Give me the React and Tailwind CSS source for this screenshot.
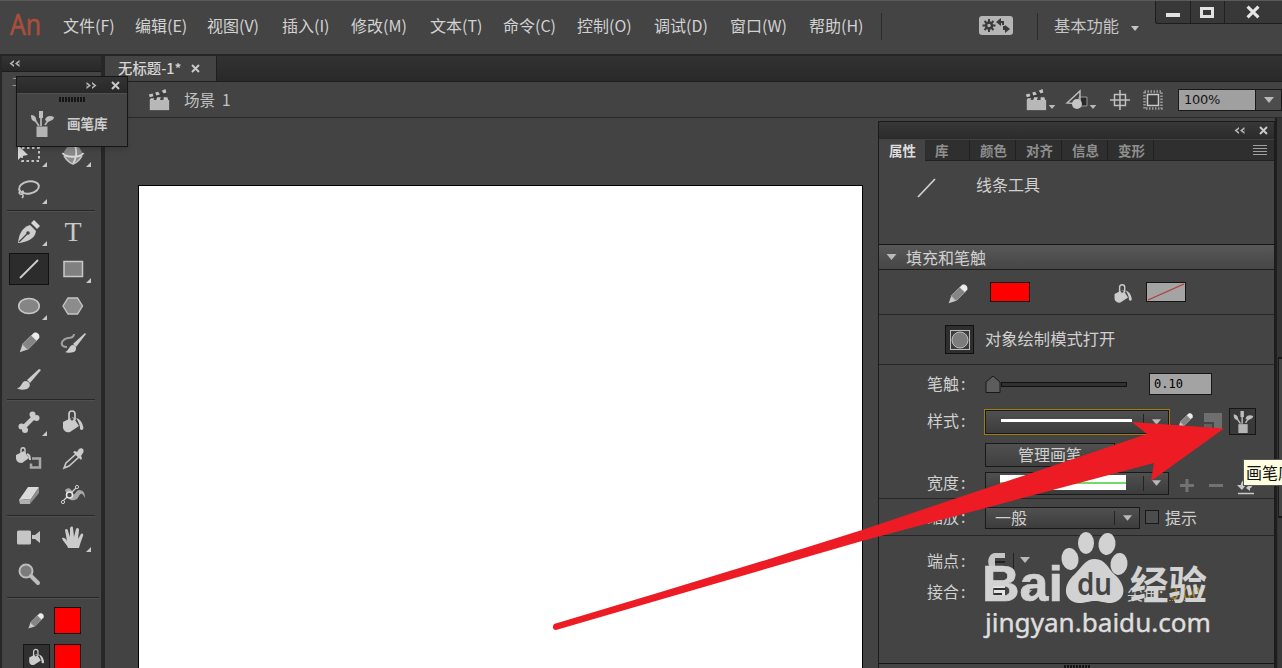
const FONT = "font-['Noto_Sans','Noto_Sans_CJK_SC',sans-serif]";
const CJK = "font-['Noto_Sans_CJK_SC',sans-serif]";

const MENUS = [
  { label: '文件(F)', width: 'w-[72px]' },
  { label: '编辑(E)', width: 'w-[72px]' },
  { label: '视图(V)', width: 'w-[75px]' },
  { label: '插入(I)', width: 'w-[69px]' },
  { label: '修改(M)', width: 'w-[79px]' },
  { label: '文本(T)', width: 'w-[73px]' },
  { label: '命令(C)', width: 'w-[74px]' },
  { label: '控制(O)', width: 'w-[77px]' },
  { label: '调试(D)', width: 'w-[76px]' },
  { label: '窗口(W)', width: 'w-[79px]' },
  { label: '帮助(H)', width: 'w-[72px]' },
];

const TABS = [
  { label: '库', width: 'w-[45px] pl-[10px]' },
  { label: '颜色', width: 'w-[46px] pl-[10px]' },
  { label: '对齐', width: 'w-[46px] pl-[10px]' },
  { label: '信息', width: 'w-[46px] pl-[10px]' },
  { label: '变形', width: 'w-[46px] pl-[10px]' },
];

/** Square svg box shared by the tool icons. */
function Icon({ size = 26, children }) {
  return (
    <svg width={size} height={size} viewBox="0 0 26 26" fill="none" className="shrink-0">
      {children}
    </svg>
  );
}

const TransformIcon = () => (
  <Icon>
    <rect x="6" y="7" width="17" height="13" stroke="#c4c4c4" strokeWidth="2" strokeDasharray="2.5 2.5" />
    <path d="M2 4v15l4-4 6-1z" fill="#d6d6d6" />
  </Icon>
);

const Rotate3dIcon = () => (
  <Icon>
    <circle cx="13" cy="13" r="9" fill="#8a8a8a" />
    <path d="M2.500 12c3 5 18 5 21 0" stroke="#d8d8d8" strokeWidth="1.800" />
    <path d="M15 4c2 6 2 12-2 19" stroke="#d8d8d8" strokeWidth="1.8" />
    <path d="M4 15c2 3 5 7 9 8 4-1 7-5 9-8" stroke="#c4c4c4" strokeWidth="1.400" />
  </Icon>
);

const LassoIcon = () => (
  <Icon>
    <ellipse cx="13" cy="10.5" rx="10" ry="6" transform="rotate(-10 13 10.5)" stroke="#c4c4c4" strokeWidth="2" />
    <path d="M4 14c-2 2 0 4 2 3s2-3 0-3m0 3c2 1 1 3 0 4" stroke="#c4c4c4" strokeWidth="1.6" />
  </Icon>
);

const PenIcon = () => (
  <Icon>
    <path d="M2 24C3 16 5 9 14 6l6 6c-1 8-8 10-16 12z" fill="#cdcdcd" />
    <path d="M15 4l3-3 6 6-3 3z" fill="#d8d8d8" />
    <path d="M3 23l8-8" stroke="#444" strokeWidth="1.2" />
    <circle cx="12" cy="14" r="1.8" fill="#444" />
  </Icon>
);

const LineIcon = () => (
  <Icon>
    <path d="M4 22L22 4" stroke="#cfcfcf" strokeWidth="1.8" />
  </Icon>
);

const RectIcon = () => (
  <Icon>
    <rect x="4" y="5.500" width="18.500" height="15" fill="#808080" stroke="#c8c8c8" strokeWidth="1.5" />
  </Icon>
);

const OvalIcon = () => (
  <Icon>
    <ellipse cx="13" cy="13" rx="10.3" ry="7.6" fill="#858585" stroke="#c8c8c8" strokeWidth="1.5" />
  </Icon>
);

const PolyIcon = () => (
  <Icon>
    <path d="M8 5h9.500l5 8-5 8H8l-5-8z" fill="#8c8c8c" stroke="#c4c4c4" strokeWidth="1.4" />
  </Icon>
);

const PencilIcon = ({ size }) => (
  <Icon size={size}>
    <path d="M2 24l3-9 6 6z" fill="#c8c8c8" />
    <path d="M5 15L15 5l6 6-10 10z" fill="#858585" stroke="#a8a8a8" />
    <path d="M15 5l3-3c4-1 7 2 6 6l-3 3z" fill="#ececec" />
  </Icon>
);

const BrushIcon = () => (
  <Icon>
    <path d="M11 13L23 2l2 1-11 13z" fill="#cdcdcd" />
    <path d="M1 21c5 0 4-7 9-7 5 1 5 6 1 8-4 1-8 1-10-1z" fill="#cdcdcd" />
  </Icon>
);

const PaintBrushIcon = () => (
  <Icon>
    <path d="M13 14L25 3l1 1-10 13z" fill="#cdcdcd" />
    <path d="M5 22c4-1 4-7 8-7 4 1 4 5 1 7-3 1-7 1-9 0z" fill="#cdcdcd" />
    <path d="M14 4c0 3-3 4-6 4-5 1-8 5-5 8 1 1 2 1 4 1" stroke="#a0a0a0" strokeWidth="2" />
  </Icon>
);

const BoneIcon = () => (
  <Icon>
    <path d="M7 19L19 7" stroke="#cacaca" strokeWidth="4.500" />
    <g fill="#cacaca">
      <circle cx="5.500" cy="17.500" r="3" />
      <circle cx="9" cy="21" r="3" />
      <circle cx="16.500" cy="5.500" r="3" />
      <circle cx="20.500" cy="9" r="3" />
    </g>
  </Icon>
);

const BucketIcon = ({ size }) => (
  <Icon size={size}>
    <path d="M3 13l10-5 6 9-9 6c-4 1-6-1-7-4z" fill="#cbcbcb" />
    <path d="M9 12V5c0-4 6-4 6 0v6" stroke="#cbcbcb" strokeWidth="1.7" />
    <circle cx="12" cy="10" r="1.500" fill="#444" />
    <path d="M16 9c4 1 6 4 7 8 2 5-4 5-3 1-1-4-2-6-4-9z" fill="#cbcbcb" />
  </Icon>
);

const InkBottleIcon = () => (
  <Icon>
    <path d="M0 9l8-4 5 7-7 5c-3 0-5-1-6-4z" fill="#cbcbcb" />
    <path d="M5 8V4c0-3 4-3 4 0v4" stroke="#cbcbcb" strokeWidth="1.4" />
    <path d="M11 8c3 1 3 4 3 6" stroke="#cbcbcb" strokeWidth="2" />
    <path d="M16 12.500h8v9h-9v-4" stroke="#a8a8a8" strokeWidth="2.500" />
  </Icon>
);

const EyedropperIcon = () => (
  <Icon>
    <path d="M4 22l2-5L16 8l3 3-10 9z" stroke="#c8c8c8" strokeWidth="1.6" />
    <path d="M13 6l2-1 2 1 2-3c3-2 6 1 4 4l-2 3 1 2-1 2z" fill="#cbcbcb" />
  </Icon>
);

const EraserIcon = () => (
  <Icon>
    <path d="M3 18L12 5h11L15 17z" fill="#dadada" />
    <path d="M3 18l12-1-1 5H4z" fill="#b0b0b0" />
    <path d="M15 17l8-12v6l-9 11z" fill="#8f8f8f" />
  </Icon>
);

const WidthToolIcon = () => (
  <Icon>
    <path d="M5 8c4-4 7-1 8 4 3 1 3-4 6-4 5 0 6 4 6 8-2-4-4-6-6-2-2 5-7 5-10 3" fill="#a6a6a6" />
    <path d="M2 20L17 5" stroke="#d0d0d0" strokeWidth="1.3" />
    <circle cx="9.500" cy="13" r="3" fill="#444" stroke="#e6e6e6" strokeWidth="1.5" />
    <circle cx="3" cy="20" r="1.600" fill="#444" stroke="#cfcfcf" />
    <circle cx="17" cy="5" r="1.600" fill="#444" stroke="#cfcfcf" />
  </Icon>
);

const CameraIcon = () => (
  <Icon>
    <rect x="1" y="5.500" width="14" height="14" rx="1.5" fill="#c6c6c6" />
    <path d="M16 10h3l5-4v12l-5-4h-3z" fill="#c6c6c6" />
  </Icon>
);

const HandIcon = () => (
  <Icon>
    <path d="M8 23c-1-4-5-6-6-10 2-1 4 1 5 3L5 5c1-2 3-1 3 1l2 6V3c1-2 3-2 3 0l1 9 2-8c1-2 3-1 3 1l-1 9 3-5c1-1 3 0 2 2-2 5-3 8-4 12z" fill="#cccccc" />
  </Icon>
);

const ZoomIcon = () => (
  <Icon>
    <circle cx="10" cy="10" r="6.500" fill="#7b7b7b" stroke="#bdbdbd" strokeWidth="2" />
    <path d="M15 15l7 7" stroke="#bdbdbd" strokeWidth="4" strokeLinecap="round" />
  </Icon>
);

const BrushLibraryIcon = ({ size }) => (
  <Icon size={size}>
    <path d="M7.500 15.500h11V26h-11z" fill="#b4b4b4" />
    <path d="M12 15V6M10 15L6 9M16 14l4-6" stroke="#b4b4b4" strokeWidth="1.800" />
    <path d="M10 0h4v7h-4zM2 4c4 0 6 3 5 7-4-1-5-3-5-7zM16 9c1-4 5-5 9-3 0 3-4 4-6 5z" fill="#bdbdbd" />
  </Icon>
);

const ClapperIcon = ({ size }) => (
  <Icon size={size}>
    <path d="M3 13h21v11H3z" fill="#b8b8b8" />
    <path d="M3 12V9L20 3l1 4L6 12z" fill="#3a3a3a" />
    <path d="M2 7l4-1 1 3-4 1zM9 5l3-1 2 3-4 1zM16 3l4-2 1 4-3 1zM4 11h4l-1 2H3zM11 10h4l-1 3h-4zM18 10h4l1 3h-5z" fill="#c4c4c4" />
  </Icon>
);

function Caret({ className = '' }) {
  return (
    <svg width="12" height="8" viewBox="0 0 12 8" className={className}>
      <path d="M1 1h10L6 7z" fill="#b9b9b9" />
    </svg>
  );
}

function Close({ size = 9, color = '#c9c9c9' }) {
  return (
    <svg width={size} height={size} viewBox="0 0 9 9">
      <path d="M1 1l7 7M8 1L1 8" stroke={color} strokeWidth="2" />
    </svg>
  );
}

/** Double arrow used to collapse or expand a panel. */
function Chevrons({ flip }) {
  return (
    <svg width="11" height="7" viewBox="0 0 11 7" className={flip ? 'rotate-180' : ''}>
      <path d="M5 0v7L0.500 3.500zM10.500 0v7L6 3.500z" fill="#b5b5b5" />
      <path d="M5 2v3L3 3.500zM10.500 2v3L8.500 3.500z" fill="#2d2d2d" />
    </svg>
  );
}

function Grip() {
  return (
    <div className="flex gap-px">
      {Array.from({ length: 9 }, (_, i) => (
        <div key={i} className="w-[2px] h-[5px] bg-[#151515]" />
      ))}
    </div>
  );
}

function Tool({ children, menu, active }) {
  return (
    <div className="relative flex items-center justify-center w-[44px] h-full">
      {active ? (
        <div className="flex items-center justify-center w-[40px] h-[32px] bg-[#2c2c2c] border border-[#111]">{children}</div>
      ) : (
        children
      )}
      {menu && (
        <svg width="5" height="5" viewBox="0 0 5 5" className="absolute right-[4px] bottom-[4px]">
          <path d="M5 0v5H0z" fill="#c8c8c8" />
        </svg>
      )}
    </div>
  );
}

function Row({ children, className = 'h-[37px]' }) {
  return <div className={`flex shrink-0 ${className}`}>{children}</div>;
}

const Rule = ({ className }) => <div className={`shrink-0 h-px bg-[#262626] shadow-[0_1px_0_#505050] ${className}`} />;

function MenuBar() {
  return (
    <header className="flex shrink-0 h-[54px] bg-[#444] border-t border-[#5a5a5a]">
      <svg width="63" height="50" viewBox="0 0 63 50" className="shrink-0">
        <text x="10" y="34" fontSize="29" fill="#a94f3c" stroke="#a94f3c" strokeWidth=".7" textLength="31" lengthAdjust="spacingAndGlyphs" className="font-['Open_Sans',sans-serif]">An</text>
      </svg>
      <nav className={`flex w-[818px] leading-[49px] text-[#d2d2d2] ${CJK}`}>
        {MENUS.map((menu) => (
          <span key={menu.label} className={`shrink-0 whitespace-nowrap text-[16px] ${menu.width}`}>{menu.label}</span>
        ))}
      </nav>
      <div className="w-px h-[27px] mt-[12px] bg-[#2b2b2b]" />
      <div className="flex items-center justify-center w-[34px] h-[19px] ml-[97px] mt-[15px] rounded-[3px] bg-[#b5b5b5]">
        <svg width="28" height="15" viewBox="0 0 28 15" fill="none" stroke="#3a3a3a">
          <circle cx="7" cy="7.500" r="3" strokeWidth="2.500" />
          <path d="M7 1v3M7 11v3M.5 7.500h3M10.500 7.500h3M2.500 3l2 2M9.500 10l2 2M11.500 3l-2 2M4.500 10l-2 2" strokeWidth="2" />
          <path d="M17 4h4v3M27 11h-5V8" strokeWidth="2" />
          <path d="M19 0l-5 4 5 4zM23 7l5 4-5 4z" fill="#3a3a3a" stroke="none" />
        </svg>
      </div>
      <div className="w-px h-[27px] ml-[24px] mt-[12px] bg-[#2b2b2b]" />
      <span className={`w-[78px] pl-[16px] whitespace-nowrap text-[16.3px] leading-[48px] text-[#c6c6c6] ${CJK}`}>基本功能</span>
      <svg width="8" height="5" viewBox="0 0 8 5" className="ml-[15px] mt-[25px]">
        <path d="M0 0h8L4 5z" fill="#c4c4c4" />
      </svg>
      <div className="flex w-[127px] h-[23px] ml-auto border-l border-b border-[#1d1d1d] rounded-bl-[3px] bg-[#383838]">
        <div className="flex justify-center items-center w-[37px] border-r border-[#202020]">
          <div className="w-[14px] h-[4px] mt-[6px] bg-[#e2e2e2]" />
        </div>
        <div className="flex justify-center items-center w-[36px] border-r border-[#202020]">
          <div className="w-[14px] h-[11px] border-[3px] border-[#e2e2e2]" />
        </div>
        <div className="flex justify-center items-center w-[61px]">
          <Close size={14} color="#e6e6e6" />
        </div>
      </div>
    </header>
  );
}

function ToolPanel() {
  return (
    <aside className="flex flex-col shrink-0 w-[105px] h-full bg-[#444] border-l-2 border-r-4 border-[#272727]">
      <div className="flex shrink-0 items-center h-[16px] pl-[7px] bg-gradient-to-b from-[#343434] to-[#282828] border-b border-[#1d1d1d]">
        <Chevrons />
      </div>
      <div className="flex flex-col pl-[5px]">
        <div className="h-[64px] pl-[5px] text-[10px] leading-[20px] text-[#aaa]">工</div>
        <Row className="h-[35px]"><Tool menu><TransformIcon /></Tool><Tool menu><Rotate3dIcon /></Tool></Row>
        <Row className="h-[37px]"><Tool menu><LassoIcon /></Tool></Row>
        <Rule className="w-[88px] mt-[2px] mb-[2px]" />
        <Row>
          <Tool menu><PenIcon /></Tool>
          <Tool><span className="text-[28px] leading-none text-[#c9c9c9] font-['Liberation_Serif',serif]">T</span></Tool>
        </Row>
        <Row><Tool active><LineIcon /></Tool><Tool menu><RectIcon /></Tool></Row>
        <Row><Tool menu><OvalIcon /></Tool><Tool><PolyIcon /></Tool></Row>
        <Row><Tool><PencilIcon size={23} /></Tool><Tool><PaintBrushIcon /></Tool></Row>
        <Row><Tool><BrushIcon /></Tool></Row>
        <Rule className="w-[88px] mt-[1px] mb-[3px]" />
        <Row><Tool menu><BoneIcon /></Tool><Tool><BucketIcon /></Tool></Row>
        <Row><Tool><InkBottleIcon /></Tool><Tool><EyedropperIcon /></Tool></Row>
        <Row className="h-[36px]"><Tool><EraserIcon /></Tool><Tool><WidthToolIcon /></Tool></Row>
        <Rule className="w-[88px] mt-[2px] mb-[3px]" />
        <Row><Tool><CameraIcon /></Tool><Tool menu><HandIcon /></Tool></Row>
        <Row className="h-[36px]"><Tool><ZoomIcon /></Tool></Row>
        <Rule className="w-[92px] mt-[5px] mb-[9px]" />
        <Row className="h-[27px] pl-[20px] items-center gap-[9px]">
          <PencilIcon size={18} />
          <div className="w-[27px] h-[27px] bg-[#ff0000] border border-[#101010]" />
        </Row>
        <Row className="h-[27px] mt-[10px] pl-[16px] gap-[4px]">
          <div className="flex items-center justify-center w-[27px] h-[27px] bg-[#303030] border border-[#161616]"><BucketIcon size={19} /></div>
          <div className="w-[27px] h-[27px] bg-[#ff0000] border border-[#101010]" />
        </Row>
      </div>
    </aside>
  );
}

function EditBar() {
  return (
    <div className="flex shrink-0 items-center h-[36px] bg-[#434343] border-b border-[#2a2a2a]">
      <div className="flex items-center w-[921px] pl-[42px]">
        <ClapperIcon size={24} />
        <span className={`ml-[13px] text-[15.500px] leading-none text-[#c2c2c2] ${CJK}`}>场景&nbsp; 1</span>
      </div>
      <ClapperIcon size={24} />
      <Caret className="w-[8px] mt-[14px]" />
      <svg width="24" height="22" viewBox="0 0 24 22" fill="none" className="ml-[9px]">
        <path d="M14 8h8v9h-8z" fill="#282828" stroke="#999" />
        <path d="M2 14L15 2v13z" stroke="#bdbdbd" strokeWidth="1.5" />
        <circle cx="12" cy="15" r="5" fill="#c6c6c6" />
      </svg>
      <Caret className="w-[8px] mt-[14px]" />
      <svg width="20" height="20" viewBox="0 0 20 20" fill="none" stroke="#c0c0c0" strokeWidth="1.500" className="ml-[13px]">
        <path d="M4.500 4.500h11v11h-11zM10 0v20M0 10h20" />
      </svg>
      <svg width="20" height="20" viewBox="0 0 20 20" fill="none" className="ml-[13px]">
        <rect x="1.500" y="1.500" width="17" height="17" stroke="#9b9b9b" strokeWidth="2.500" strokeDasharray="1.500 1.500" />
        <rect x="4.500" y="4.500" width="11" height="11" fill="#3b3b3b" stroke="#c8c8c8" strokeWidth="1.500" />
      </svg>
      <div className="flex w-[104px] h-[22px] ml-[15px] border border-[#191919]">
        <div className="w-[77px] pl-[5px] bg-[#a0a0a0] border-r border-[#191919] text-[13px] leading-[20px] text-[#151515] font-['DejaVu_Sans',sans-serif] tracking-[-0.300px]">100%</div>
        <div className="flex items-center justify-center w-[25px] bg-[#4c4c4c]"><Caret /></div>
      </div>
    </div>
  );
}

function Select({ children, className }) {
  return (
    <div className={`flex border border-[#191919] bg-gradient-to-b from-[#505050] to-[#3c3c3c] ${className}`}>
      <div className="flex flex-1 items-center">{children}</div>
      <div className="flex items-center justify-center w-[25px] my-[3px] border-l border-[#222]"><Caret className="w-[11px]" /></div>
    </div>
  );
}

function Label({ children, className = 'w-[58px]' }) {
  return (
    <span className={`shrink-0 pb-[3px] whitespace-nowrap ${className}`}>
      {children}
      <span className="ml-[2px]">:</span>
    </span>
  );
}

function StrokeSettings() {
  return (
    <div className="flex flex-col shrink-0 h-[134px] pl-[48px] border-t border-[#262626]">
      <div className="flex items-center h-[38px]">
        <Label>笔触</Label>
        <svg width="16" height="19" viewBox="0 0 16 19" className="shrink-0">
          <path d="M1 17.500V7l7-6 7 6v10.500z" fill="#5c5c5c" stroke="#181818" />
        </svg>
        <div className="w-[126px] h-[5px] bg-[#303030] border border-[#111]" />
        <div className="w-[63px] h-[22px] ml-[22px] pl-[4px] border border-[#161616] bg-[#a3a3a3] text-[12px] leading-[20px] text-black font-['DejaVu_Sans_Mono',monospace]">0.10</div>
      </div>
      <div className="flex items-center h-[37px]">
        <Label className="w-[57px]">样式</Label>
        <div className="border border-[#a37a12]">
          <Select className="w-[184px] h-[24px]"><div className="w-[131px] h-[3px] ml-[15px] mb-[2px] bg-white" /></Select>
        </div>
        <div className="ml-[7px] mb-[3px]"><PencilIcon size={17} /></div>
        <svg width="18" height="17" viewBox="0 0 18 17" className="ml-[10px]">
          <path d="M0 0h18v17H10V9H0z" fill="#6e6e6e" />
          <path d="M0 11h8v6H0z" fill="#606060" />
        </svg>
        <div className="flex items-center justify-center w-[27px] h-[27px] ml-[7px] border border-[#161616] bg-[#393939]"><BrushLibraryIcon size={22} /></div>
      </div>
      <div className="flex items-center h-[29px] pl-[58px]">
        <div className="w-[130px] h-[24px] border border-[#191919] bg-gradient-to-b from-[#505050] to-[#404040] text-center leading-[20px]">管理画笔</div>
      </div>
      <div className="flex items-center h-[28px]">
        <Label>宽度</Label>
        <Select className="w-[184px] h-[23px]">
          <div className="flex items-center w-[126px] h-[15px] ml-[14px] mb-px bg-white"><div className="w-full h-[2px] bg-[#74d96b]" /></div>
        </Select>
        <svg width="74" height="18" viewBox="0 0 74 18" fill="none" className="ml-[11px] mt-[6px]">
          <path d="M0 8.500h14M7 2v13M29 8.500h14" stroke="#727272" strokeWidth="3" />
          <path d="M58 16.500h16" stroke="#c9c9c9" strokeWidth="1.500" />
          <path d="M62 11c-1-4 1-8 5-8M72 2c2 4 0 8-4 9" stroke="#c9c9c9" strokeWidth="2" />
          <path d="M57 8h9l-4 5zM66 11l4-4v7z" fill="#c9c9c9" />
        </svg>
      </div>
    </div>
  );
}

/** Docked panel with the options of the selected tool. */
function PropertiesPanel() {
  return (
    <section className={`flex flex-col shrink-0 w-[397px] h-[560px] mt-[3px] bg-[#444] border-x border-t border-[#1b1b1b] text-[16px] leading-none text-[#d0d0d0] ${CJK}`}>
      <div className="flex shrink-0 items-center justify-end gap-[14px] h-[17px] pr-[6px] bg-gradient-to-b from-[#383838] to-[#2b2b2b]">
        <Chevrons />
        <Close />
      </div>
      <div className="flex shrink-0 h-[22px] bg-[#2f2f2f] border-t border-[#414141] text-[13.500px] leading-[20px] font-bold text-[#8f8f8f]">
        <span className="w-[46px] pl-[10px] bg-[#444] text-[#dcdcdc]">属性</span>
        {TABS.map((tab) => (
          <span key={tab.label} className={`border-r border-b border-[#202020] ${tab.width}`}>{tab.label}</span>
        ))}
        <div className="flex flex-1 items-center justify-end pr-[7px] border-b border-[#202020]">
          <svg width="14" height="11" viewBox="0 0 14 11">
            <path d="M0 .5h14M0 3.500h14M0 6.500h14M0 9.500h14" stroke="#a0a0a0" />
          </svg>
        </div>
      </div>
      <div className="flex shrink-0 h-[83px] pt-[14px] pl-[35px]">
        <Icon>
          <path d="M4 22L21 4" stroke="#cfcfcf" strokeWidth="1.800" />
        </Icon>
        <span className="ml-[36px] pt-px">线条工具</span>
      </div>
      <div className="flex shrink-0 items-center h-[25px] pl-[6px] gap-[8px] border-t border-[#151515] bg-gradient-to-b from-[#585858] to-[#464646]">
        <Caret className="w-[13px]" />
        <span className="pb-px">填充和笔触</span>
      </div>
      <div className="flex shrink-0 items-center h-[45px] pl-[68px] border-t border-[#1d1d1d]">
        <div className="mt-[3px]"><PencilIcon size={22} /></div>
        <div className="w-[40px] h-[20px] ml-[21px] border border-[#151515] bg-[#ff0000]" />
        <div className="ml-[82px] mt-[3px]"><BucketIcon size={22} /></div>
        <svg width="40" height="20" viewBox="0 0 40 20" className="ml-[12px]">
          <rect x=".5" y=".5" width="39" height="19" fill="#a4a4a4" stroke="#151515" />
          <path d="M2 18L38 2" stroke="#b33a33" strokeWidth="1.300" />
        </svg>
      </div>
      <div className="flex shrink-0 items-center h-[50px] pl-[66px] gap-[11px] border-t border-[#262626]">
        <div className="flex items-center justify-center w-[29px] h-[29px] border border-[#101010] bg-[#2e2e2e]">
          <svg width="20" height="20" viewBox="0 0 20 20" stroke="#bdbdbd">
            <rect x=".5" y=".5" width="19" height="19" fill="#3c3c3c" />
            <circle cx="10" cy="10" r="8" fill="#7c7c7c" />
          </svg>
        </div>
        <span className="pb-[2px] text-[16.300px]">对象绘制模式打开</span>
      </div>
      <StrokeSettings />
      <div className="flex shrink-0 items-center h-[37px] pl-[48px] border-t border-[#262626]">
        <Label>缩放</Label>
        <Select className="w-[155px] h-[22px] mt-[2px]"><span className="pl-[9px] pb-[2px]">一般</span></Select>
        <div className="w-[14px] h-[14px] ml-[5px] mr-[6px] border border-[#181818] bg-[#4c4c4c]" />
        <span className="pb-px">提示</span>
      </div>
      <div className="flex flex-col shrink-0 h-[128px] pt-[10px] pl-[48px] border-t border-[#262626]">
        <div className="flex items-center h-[31px]">
          <Label>端点</Label>
          <svg width="20" height="18" viewBox="0 0 20 18" className="ml-[3px]">
            <path d="M17 0H7C-2 1-2 16 7 18h10v-5H7V5h10z" fill="#c6c6c6" />
            <path d="M7 9h10" stroke="#222" strokeWidth="2" />
          </svg>
          <div className="w-px h-[18px] mx-[5px] bg-[#222]" />
          <Caret className="mb-[4px]" />
        </div>
        <div className="flex items-center h-[31px]">
          <Label>接合</Label>
          <svg width="20" height="18" viewBox="0 0 20 18" className="ml-[3px]">
            <path d="M0 0h17v14H0z" fill="#e4e4e4" />
            <path d="M4 5h13M5 5v5h9" fill="none" stroke="#333" strokeWidth="2" />
          </svg>
          <Caret className="ml-[13px]" />
          <span className="ml-[94px]">尖角:</span>
          <span className="ml-[6px] border-b border-dotted border-[#b58a1c] text-[#b58a1c]">3.00</span>
        </div>
      </div>
      <div className="flex justify-center shrink-0 h-[6px] pt-px border-t border-[#151515]"><Grip /></div>
    </section>
  );
}

function BrushLibrary() {
  return (
    <div className="absolute left-[16px] top-[76px] w-[112px] h-[71px] bg-[#444] border border-[#161616] shadow-md">
      <div className="flex items-center justify-end gap-[14px] h-[17px] pr-[7px] bg-gradient-to-b from-[#333] to-[#282828] border-b border-[#505050]">
        <Chevrons flip />
        <Close />
      </div>
      <div className="flex justify-center pt-[3px]"><Grip /></div>
      <div className="flex items-center h-[43px] pl-[12px] gap-[12px]">
        <BrushLibraryIcon size={26} />
        <span className={`text-[13.500px] leading-none font-bold text-[#cdcdcd] ${CJK}`}>画笔库</span>
      </div>
    </div>
  );
}

function Watermark() {
  return (
    <svg width="240" height="116" viewBox="980 528 240 116" fill="#d2d2d2" className="absolute left-[980px] top-[528px]">
      <text x="982" y="601" fontSize="50" fontWeight="700" stroke="#d2d2d2" strokeWidth=".6" textLength="81" lengthAdjust="spacingAndGlyphs" className="font-['Liberation_Sans',sans-serif]">Bai</text>
      <ellipse cx="1070" cy="559" rx="8.500" ry="11" transform="rotate(-8 1070 559)" />
      <ellipse cx="1086" cy="543" rx="8" ry="11" />
      <ellipse cx="1107" cy="544" rx="8.500" ry="11" transform="rotate(8 1107 544)" />
      <ellipse cx="1119" cy="564" rx="8.500" ry="11" transform="rotate(8 1119 564)" />
      <path d="M1095 559c10 0 13 9 19 15 14 12 12 27-3 29-7 0-10-2-16-2s-9 2-16 2c-15-1-18-17-4-29 7-7 10-15 20-15z" />
      <text x="1077" y="595" fontSize="30" fontWeight="600" fill="#444" textLength="35" lengthAdjust="spacingAndGlyphs" className="font-['Noto_Sans',sans-serif]">du</text>
      <text x="1130" y="599" fontSize="39" fontWeight="700" textLength="77" lengthAdjust="spacingAndGlyphs" className="font-['Noto_Sans_CJK_SC',sans-serif]">经验</text>
      <text x="985" y="632" fontSize="25" stroke="#dedede" strokeWidth=".4" textLength="226" lengthAdjust="spacingAndGlyphs" className="font-['Noto_Sans',sans-serif]" fill="#dedede">jingyan.baidu.com</text>
    </svg>
  );
}

export default function App() {
  return (
    <div className={`relative flex flex-col w-[1282px] h-[668px] overflow-hidden bg-[#434343] ${FONT}`}>
      <MenuBar />
      <div className="flex flex-1 min-h-0 border-t-2 border-[#252525]">
        <ToolPanel />
        <main className="flex flex-col flex-1 min-w-0">
          <div className="flex shrink-0 h-[26px] bg-gradient-to-b from-[#323232] to-[#292929] border-b border-[#1f1f1f]">
            <div className="flex items-center w-[112px] pl-[13px] gap-[10px] bg-[#444] border-r border-[#1f1f1f]">
              <span className={`text-[14.4px] leading-none font-medium whitespace-nowrap text-[#d6d6d6] ${CJK}`}>无标题-1*</span>
              <Close />
            </div>
          </div>
          <EditBar />
          <div className="flex flex-1 min-h-0 bg-[#434343]">
            <div className="flex-1 pl-[33px] pr-[15px] pt-[67px]">
              <div className="h-[490px] bg-white border border-black" />
            </div>
            <PropertiesPanel />
            <div className="flex flex-col shrink-0 w-[7px] pl-px border-l-2 border-[#1e1e1e] bg-[#333]">
              <div className="h-[239px] bg-[#343434]" />
              <div className="h-[161px] border-y-2 border-l border-[#191919] bg-[#444]" />
              <div className="flex-1 bg-[#3a3a3a]" />
            </div>
          </div>
        </main>
      </div>
      <BrushLibrary />
      <Watermark />
      <svg width="690" height="220" viewBox="545 415 690 220" className="absolute left-[545px] top-[415px]">
        <path d="M554 624Q710 578 862 530L1147 434 1132 422 1224 428.500 1151 481 1154 463 862 541Q710 585 556 630 551 629 554 624z" fill="#ed1c24" />
      </svg>
      <div className={`absolute left-[1243px] top-[459px] w-[60px] h-[27px] pl-[2px] bg-[#ffffe1] border border-[#555] text-[16px] leading-[24px] text-[#111] whitespace-nowrap ${CJK}`}>画笔库</div>
    </div>
  );
}
